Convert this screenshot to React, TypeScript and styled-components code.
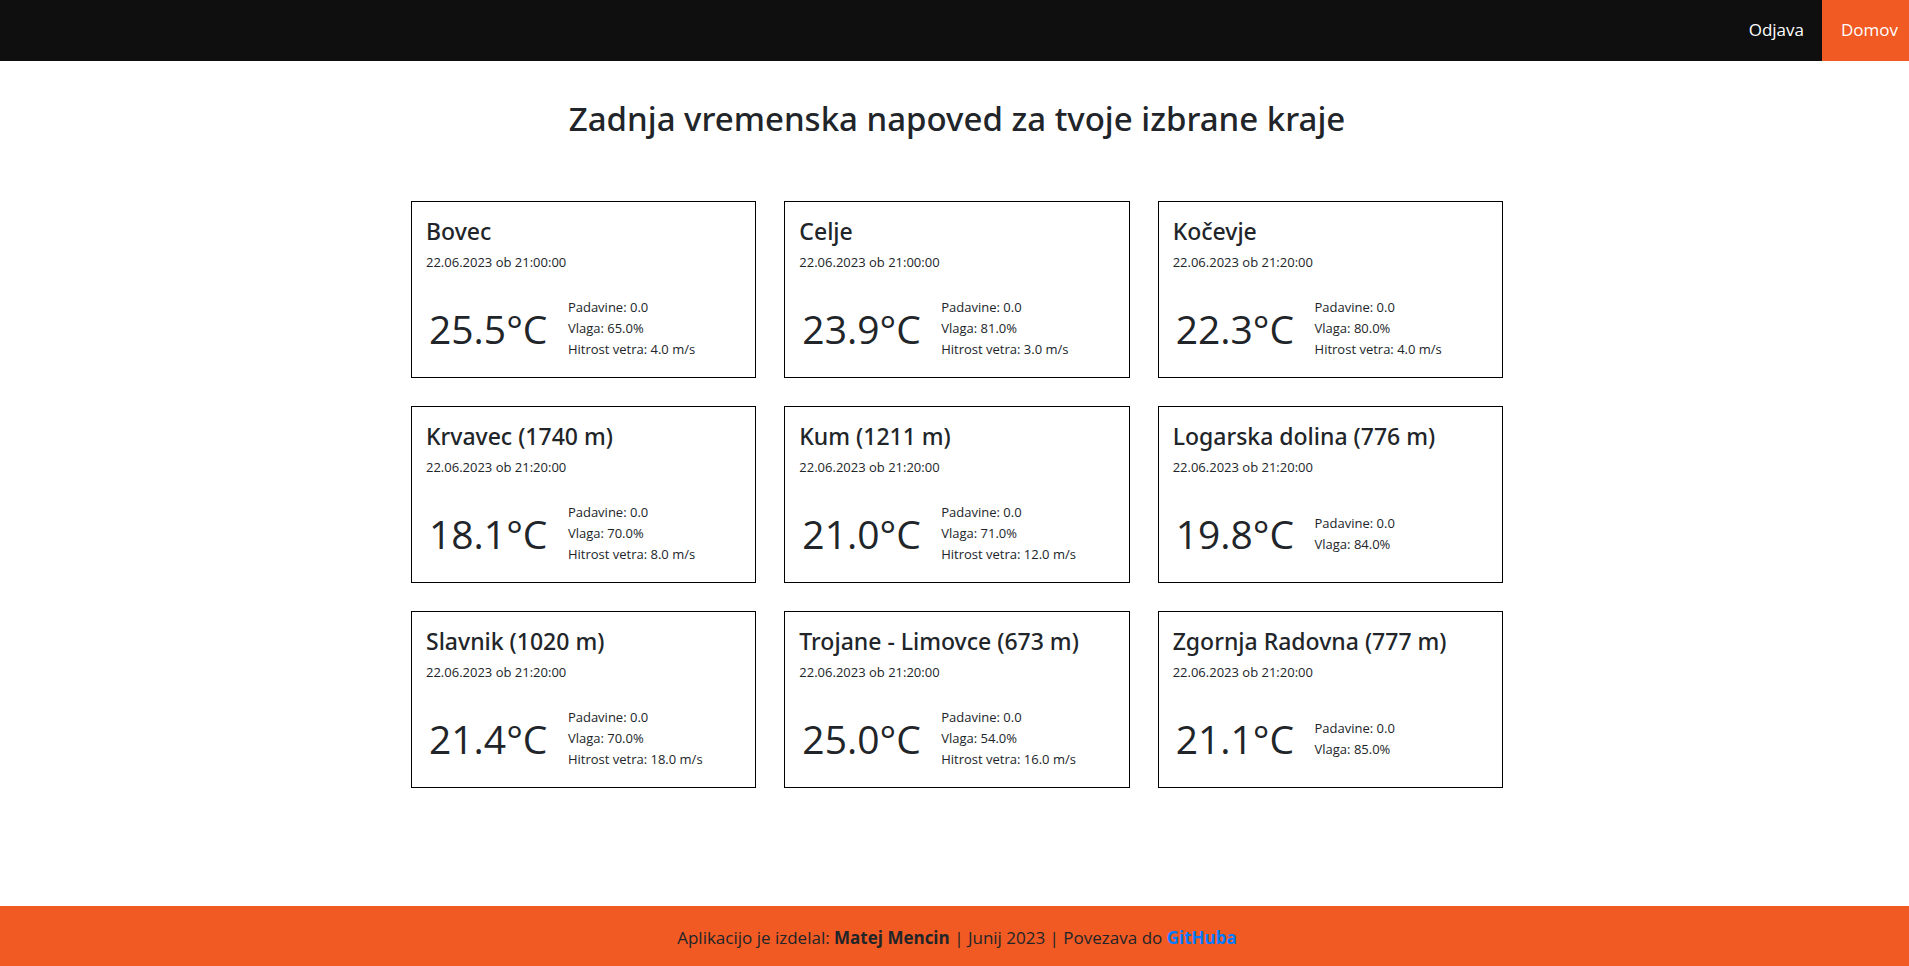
import React from 'react';
import styled, { createGlobalStyle } from 'styled-components';

const GlobalStyle = createGlobalStyle`
  *, *::before, *::after {
    box-sizing: border-box;
  }

  body {
    margin: 0;
    background: #ffffff;
    color: #212529;
    font-family: 'Open Sans', 'Noto Sans', sans-serif;
    font-size: 17px;
    font-weight: 400;
    line-height: 26px;
  }
`;

const Page = styled.div`
  display: flex;
  flex-direction: column;
  min-height: 100vh;
`;

const NavBar = styled.nav`
  display: flex;
  justify-content: flex-end;
  background: #0f0f0f;
`;

const NavLink = styled.a<{ $active?: boolean }>`
  display: block;
  padding: 17px 11px 18px 19px;
  margin-left: 7px;
  background: ${({ $active }) => ($active ? '#f15a22' : 'transparent')};
  color: #ffffff;
  text-decoration: none;
`;

const Main = styled.main`
  flex: 1;
  padding: 0 0 60px 5px;
`;

const Title = styled.h1`
  margin: 36px 0 60px;
  font-family: 'Noto Sans', 'Open Sans', sans-serif;
  font-size: 33px;
  font-weight: 500;
  line-height: 44px;
  text-align: center;
`;

const CardGrid = styled.section`
  display: grid;
  grid-template-columns: repeat(3, 1fr);
  gap: 28px;
  max-width: 1092px;
  margin: 0 auto;

  @media (max-width: 1000px) {
    grid-template-columns: 1fr;
    padding: 0 28px;
  }
`;

const Card = styled.article`
  padding: 14px 14px 17px;
  border: 1px solid #000000;
`;

const Place = styled.h2`
  margin: 0 0 6px;
  font-family: 'Noto Sans', 'Open Sans', sans-serif;
  font-size: 23px;
  font-weight: 500;
  line-height: 30px;
`;

const Measured = styled.p`
  margin: 0 0 24px;
  font-size: 13px;
  line-height: 21px;
`;

const Readings = styled.div`
  display: grid;
  grid-template-columns: 9fr 11fr;
  align-items: center;
  min-height: 63px;
`;

const Temperature = styled.div`
  padding-left: 3px;
  font-size: 39px;
  line-height: 63px;
  white-space: nowrap;
`;

const Details = styled.ul`
  margin: 0;
  padding: 0;
  list-style: none;
  font-size: 13px;
  line-height: 21px;
`;

const Footer = styled.footer`
  padding: 19px 0 15px 5px;
  background: #f15a22;
  text-align: center;
`;

const FooterLink = styled.a`
  color: #007bff;
  font-weight: 700;
  text-decoration: none;
`;

type Station = {
  name: string;
  time: string;
  temperature: string;
  humidity: string;
  wind?: string;
};

const stations: Station[] = [
  { name: 'Bovec', time: '21:00:00', temperature: '25.5', humidity: '65.0', wind: '4.0' },
  { name: 'Celje', time: '21:00:00', temperature: '23.9', humidity: '81.0', wind: '3.0' },
  { name: 'Kočevje', time: '21:20:00', temperature: '22.3', humidity: '80.0', wind: '4.0' },
  { name: 'Krvavec (1740 m)', time: '21:20:00', temperature: '18.1', humidity: '70.0', wind: '8.0' },
  { name: 'Kum (1211 m)', time: '21:20:00', temperature: '21.0', humidity: '71.0', wind: '12.0' },
  { name: 'Logarska dolina (776 m)', time: '21:20:00', temperature: '19.8', humidity: '84.0' },
  { name: 'Slavnik (1020 m)', time: '21:20:00', temperature: '21.4', humidity: '70.0', wind: '18.0' },
  { name: 'Trojane - Limovce (673 m)', time: '21:20:00', temperature: '25.0', humidity: '54.0', wind: '16.0' },
  { name: 'Zgornja Radovna (777 m)', time: '21:20:00', temperature: '21.1', humidity: '85.0' },
];

function StationCard({ station }: { station: Station }) {
  return (
    <Card>
      <Place>{station.name}</Place>
      <Measured>{`22.06.2023 ob ${station.time}`}</Measured>
      <Readings>
        <Temperature>{`${station.temperature}°C`}</Temperature>
        <Details>
          <li>Padavine: 0.0</li>
          <li>{`Vlaga: ${station.humidity}%`}</li>
          {station.wind && <li>{`Hitrost vetra: ${station.wind} m/s`}</li>}
        </Details>
      </Readings>
    </Card>
  );
}

export default function App() {
  return (
    <Page>
      <GlobalStyle />
      <NavBar>
        <NavLink href="#odjava">Odjava</NavLink>
        <NavLink href="#domov" $active>
          Domov
        </NavLink>
      </NavBar>
      <Main>
        <Title>Zadnja vremenska napoved za tvoje izbrane kraje</Title>
        <CardGrid>
          {stations.map((station) => (
            <StationCard key={station.name} station={station} />
          ))}
        </CardGrid>
      </Main>
      <Footer>
        Aplikacijo je izdelal: <strong>Matej Mencin</strong> | Junij 2023 | Povezava do{' '}
        <FooterLink href="#github">GitHuba</FooterLink>
      </Footer>
    </Page>
  );
}
